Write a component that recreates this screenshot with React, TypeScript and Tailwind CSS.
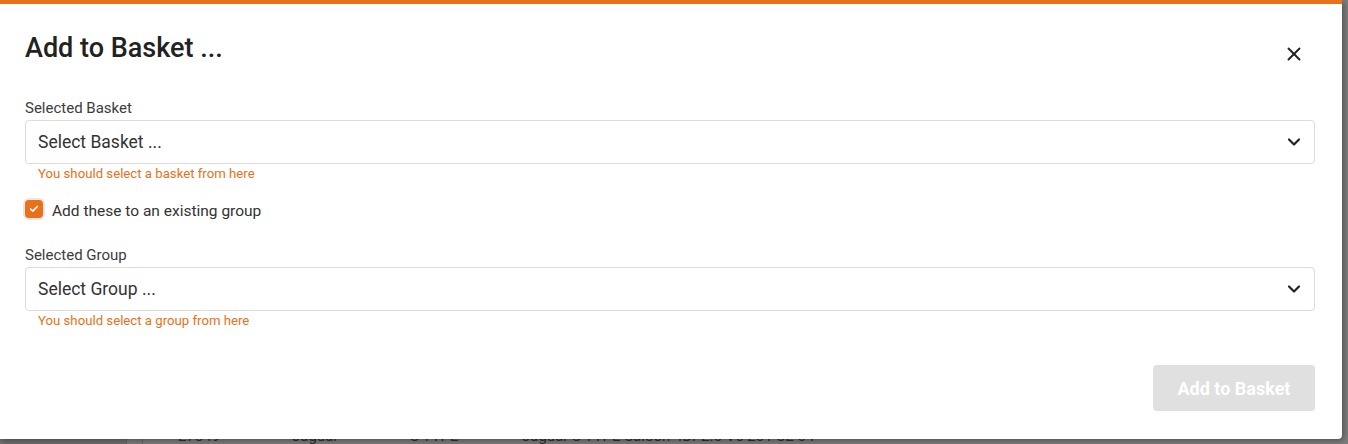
import { X, ChevronDown, Check } from "lucide-react";

const bgRows = [
  { id: "27849", make: "Jaguar", model: "S TYPE", desc: "Jaguar S TYPE Saloon 4Dr 2.5 V6 201 SE 04" },
];

function SelectField({ label, placeholder, error }: { label: string; placeholder: string; error: string }) {
  return (
    <div className="flex flex-col">
      <label className="text-[15px] leading-[20px] text-[#3c3c3c] mb-[2px]">{label}</label>
      <div className="h-[44px] rounded-[4px] border border-[#dcdcdc] bg-white flex items-center justify-between pl-[12px] pr-[10px]">
        <span className="text-[17.5px] text-[#333] pt-[1px]">{placeholder}</span>
        <ChevronDown className="w-[20px] h-[20px] text-[#222]" strokeWidth={2.6} />
      </div>
      <span className="text-[13.2px] leading-[16px] text-[#e8711a] pl-[13px] mt-[2px]">{error}</span>
    </div>
  );
}

export default function App() {
  return (
    <div className="relative w-[1348px] h-[444px] overflow-hidden bg-[#7e7e7e]" style={{ fontFamily: "Roboto, 'Liberation Sans', sans-serif" }}>
      {/* page behind the overlay */}
      <div className="pt-[426px] flex">
        <div className="w-[126px] h-[20px] bg-[#6f6f6f]" />
        <div className="w-[17px] h-[20px] border-x border-[#6a6a6a]" />
        {bgRows.map((r) => (
          <div key={r.id} className="flex text-[15px] text-[#2e2e2e] leading-[20px]">
            <span className="w-[149px] pl-[35px]">{r.id}</span>
            <span className="w-[118px]">{r.make}</span>
            <span className="w-[112px]">{r.model}</span>
            <span>{r.desc}</span>
          </div>
        ))}
      </div>

      {/* modal */}
      <div className="absolute left-0 top-0 w-[1342px] h-[439px] bg-white border-t-4 border-[#e8711a] rounded-br-[4px] shadow-[2px_2px_6px_rgba(0,0,0,0.35)] pl-[25px] pr-[27px]">
        <div className="flex items-start justify-between pt-[27px]">
          <h2 className="text-[27px] leading-[34px] font-medium text-[#222]">
            Add to Basket ...
          </h2>
          <X className="w-[22px] h-[22px] text-[#222] mr-[10px] mt-[12px]" strokeWidth={2.1} />
        </div>

        <div className="mt-[33px]">
          <SelectField label="Selected Basket" placeholder="Select Basket ..." error="You should select a basket from here" />
        </div>

        <div className="flex items-start gap-[9px] mt-[18px]">
          <div className="w-[18px] h-[18px] rounded-[4px] bg-[#e8711a] ring-2 ring-[#e6e6e6] flex items-center justify-center">
            <Check className="w-[10px] h-[10px] text-white" strokeWidth={4} />
          </div>
          <span className="text-[15.5px] leading-[18px] pt-[2px] text-[#333]">Add these to an existing group</span>
        </div>

        <div className="mt-[25px]">
          <SelectField label="Selected Group" placeholder="Select Group ..." error="You should select a group from here" />
        </div>

        <div className="flex justify-end mt-[36px]">
          <button className="w-[162px] h-[46px] rounded-[4px] bg-[#e0e0e0] text-white text-[18px] font-bold">
            Add to Basket
          </button>
        </div>
      </div>
    </div>
  );
}
